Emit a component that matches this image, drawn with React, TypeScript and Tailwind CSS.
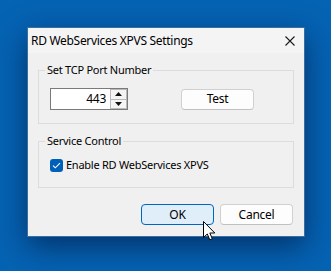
export default function App() {
  return (
    <div className="relative h-[271px] w-[331px] overflow-hidden bg-[#0563b3] pl-[27px] pt-[27px] font-['Noto_Sans',sans-serif] text-[11px] tracking-[-0.25px] text-black">
      {/* Dialog window */}
      <div className="flex h-[210px] w-[278px] flex-col border border-[#3d6d9e] bg-[#f0f0f0] shadow-[0_10px_28px_rgba(0,20,60,0.6)]">
        {/* Title bar */}
        <div className="flex h-[25px] items-center justify-between bg-[#f4f4f4] pl-[3px] pr-[9px]">
          <span className="text-[12px] leading-[16px] tracking-[-0.3px]">RD WebServices XPVS Settings</span>
          <svg width="10" height="10" viewBox="0 0 10 10" className="text-[#1a1a1a]">
            <path d="M0.5 0.5L9.5 9.5M9.5 0.5L0.5 9.5" stroke="currentColor" strokeWidth="1.1" />
          </svg>
        </div>

        <div className="flex flex-col px-[10px]">
          {/* Port group */}
          <fieldset className="mt-[9px] border border-[#dcdcdc] px-0 pb-[13px] pt-[10px]">
            <legend className="ml-[6px] px-[2px] leading-[16px]">Set TCP Port Number</legend>
            <div className="flex items-center px-[11px]">
              <div className="flex h-[22px] w-[78px] border border-[#7a7a7a] bg-white">
                <div className="flex flex-1 items-center justify-end pr-[4px] text-[12px] leading-[16px]">443</div>
                <div className="flex w-[17px] flex-col">
                  <div className="flex flex-1 items-center justify-center border border-[#b9b9b9] bg-[#f4f4f4]">
                    <svg width="7" height="4" viewBox="0 0 7 4">
                      <path d="M3.5 0L7 4H0Z" fill="#111" />
                    </svg>
                  </div>
                  <div className="flex flex-1 items-center justify-center border border-t-0 border-[#b9b9b9] bg-[#f4f4f4]">
                    <svg width="7" height="4" viewBox="0 0 7 4">
                      <path d="M0 0H7L3.5 4Z" fill="#111" />
                    </svg>
                  </div>
                </div>
              </div>
              <button className="ml-[53px] flex h-[21px] w-[73px] items-center justify-center rounded-[4px] border border-[#d0d0d0] border-b-[#c0c0c0] bg-[#fdfdfd] text-[12px] leading-[16px]">
                Test
              </button>
            </div>
          </fieldset>

          {/* Service group */}
          <fieldset className="mt-[9px] border border-[#dcdcdc] px-0 pb-[14px] pt-[8px]">
            <legend className="ml-[6px] px-[2px] leading-[16px]">Service Control</legend>
            <label className="flex h-[16px] items-center px-[11px]">
              <span className="flex h-[13px] w-[13px] items-center justify-center rounded-[3px] bg-[#005fb8]">
                <svg width="9" height="7" viewBox="0 0 9 7">
                  <path d="M1 3.6L3.3 5.8L8 1.2" fill="none" stroke="white" strokeWidth="1.1" />
                </svg>
              </span>
              <span className="ml-[3px] leading-[16px]">Enable RD WebServices XPVS</span>
            </label>
          </fieldset>

          {/* Buttons */}
          <div className="mt-[16px] flex justify-end gap-[6px] pr-[1px]">
            <button className="flex h-[21px] w-[73px] items-center justify-center rounded-[4px] border border-[#0067c0] bg-[#e0eef9] text-[12px] leading-[16px]">
              OK
            </button>
            <button className="flex h-[21px] w-[73px] items-center justify-center rounded-[4px] border border-[#d0d0d0] border-b-[#c0c0c0] bg-[#fdfdfd] text-[12px] leading-[16px]">
              Cancel
            </button>
          </div>
        </div>
      </div>

      {/* Mouse pointer */}
      <svg className="absolute left-[203px] top-[221px]" width="13" height="20" viewBox="0 0 13 20">
        <path d="M0.5 0.5V16.5L4.3 13L6.8 18.8L9.3 17.7L6.8 12H11.8Z" fill="white" stroke="black" strokeWidth="1" strokeLinejoin="round" />
      </svg>
    </div>
  );
}
